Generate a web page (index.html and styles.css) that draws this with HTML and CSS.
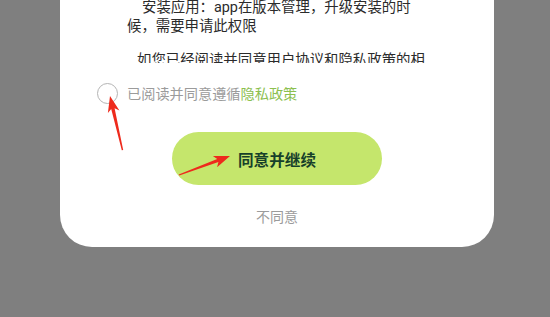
FILE: index.html
```html
<!DOCTYPE html>
<html lang="zh-CN">
<head>
<meta charset="utf-8">
<link rel="stylesheet" href="styles.css">
</head>
<body>
<div class="card">
  <div class="scroll">
    <div class="scroll-inner">
      <p class="p1">安装应用：app在版本管理，升级安装的时候，需要申请此权限</p>
      <p class="p2">如您已经阅读并同意用户协议和隐私政策的相关内容，请点击同意并继续</p>
    </div>
  </div>
  <div class="agree-row">
    <span class="check"></span>
    <span class="agree-text">已阅读并同意遵循<span class="link">隐私政策</span></span>
  </div>
  <button class="btn-ok">同意并继续</button>
  <div class="btn-no">不同意</div>
</div>
<svg class="arrows" width="550" height="317" viewBox="0 0 550 317">
  <polygon fill="#ee2a1c" points="123.2,150 114.6,108.3 119.4,110.4 110,96 107.9,112.9 111.2,109.1 121.8,150.2"/>
  <polygon fill="#ee2a1c" points="179.3,175.6 218.4,162.1 217.1,167.2 230,156 212.9,156.1 217.2,159 178.7,174.4"/>
</svg>
</body>
</html>
```
FILE: styles.css
```css
html, body {
  margin: 0;
  padding: 0;
}
body {
  background: #7f7f7f;
  width: 550px;
  height: 317px;
  overflow: hidden;
  position: relative;
  font-family: "Roboto", "Noto Sans CJK SC", sans-serif;
}
.card {
  margin-left: 60px;
  width: 434px;
  background: #ffffff;
  border-radius: 0 0 32px 32px;
  padding-bottom: 20px;
  display: flex;
  flex-direction: column;
  align-items: center;
}
.scroll {
  align-self: stretch;
  height: 63px;
  overflow: hidden;
  padding: 0 62px 0 67px;
}
.scroll-inner {
  margin-top: -2px;
  font-size: 14.4px;
  line-height: 19px;
  color: #2b2b2b;
}
.scroll-inner p {
  margin: 0;
}
.p1 {
  text-indent: 15px;
}
.p2 {
  margin-top: 15px !important;
  text-indent: 10px;
}
.agree-row {
  align-self: stretch;
  display: flex;
  align-items: center;
  gap: 9px;
  margin-top: 20px;
  padding-left: 37px;
  height: 21px;
}
.check {
  width: 19px;
  height: 19px;
  border: 1.5px solid #b4b4b4;
  border-radius: 50%;
  flex: none;
}
.agree-text {
  font-size: 14.2px;
  color: #9b9b9b;
  line-height: 20px;
}
.link {
  color: #8cc04f;
}
.btn-ok {
  margin-top: 28px;
  width: 210px;
  height: 53px;
  border: none;
  border-radius: 27px;
  background: #c5e66c;
  color: #16402a;
  font-family: inherit;
  font-size: 15.6px;
  font-weight: bold;
  padding: 0;
}
.btn-no {
  margin-top: 22px;
  font-size: 14px;
  line-height: 20px;
  color: #9b9b9b;
}
.arrows {
  position: absolute;
  left: 0;
  top: 0;
  pointer-events: none;
}
```
